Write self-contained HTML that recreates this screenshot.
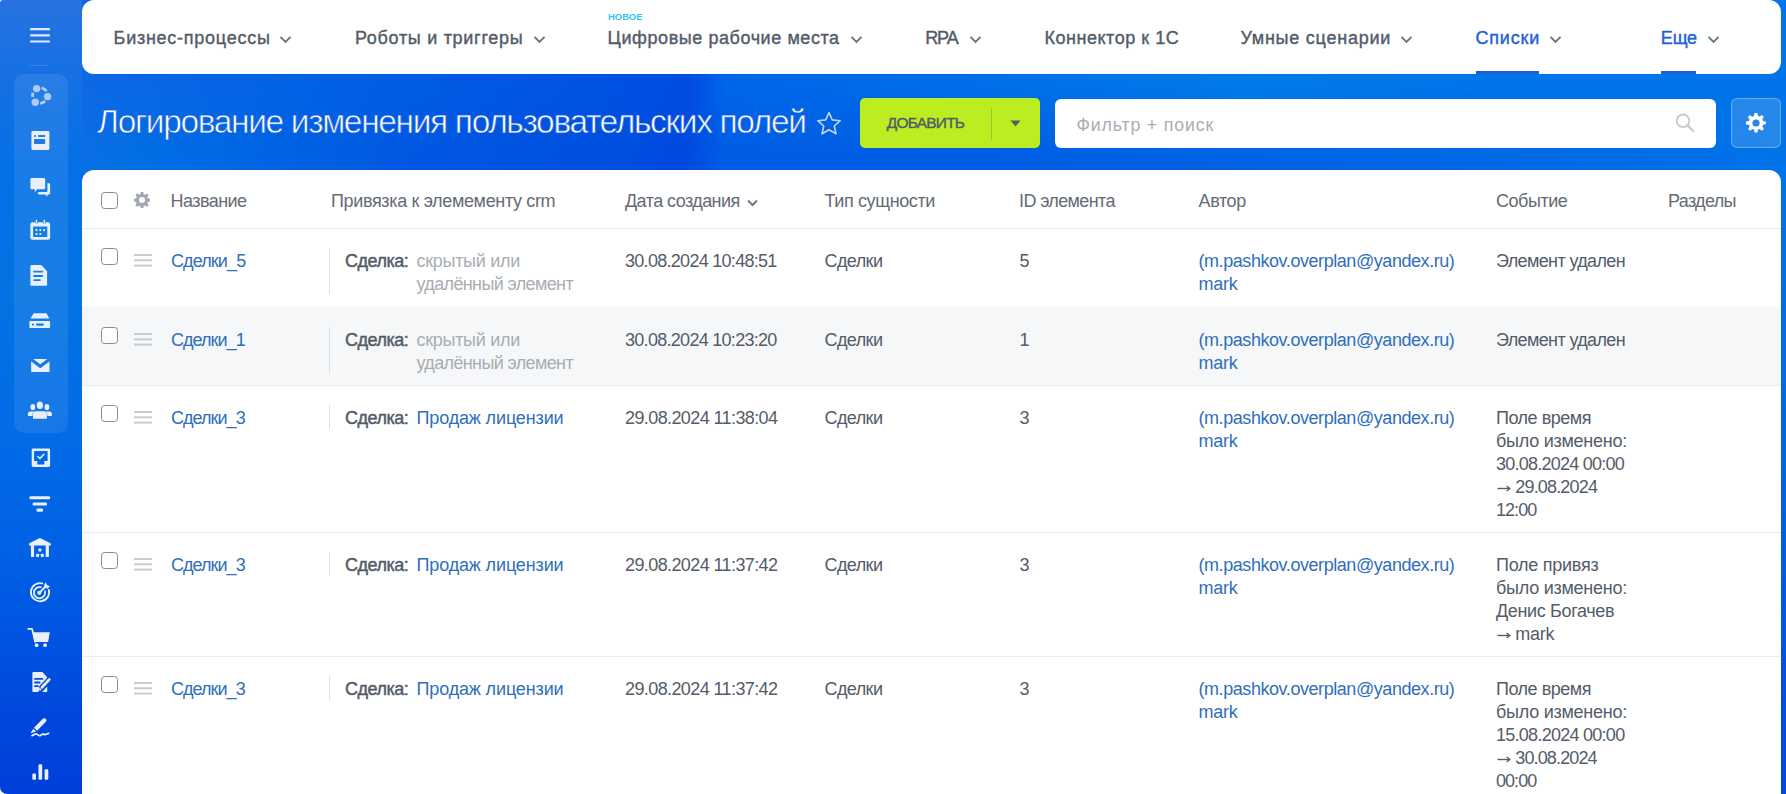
<!DOCTYPE html>
<html><head><meta charset="utf-8">
<style>
*{margin:0;padding:0;box-sizing:border-box}
html,body{width:1786px;height:794px;overflow:hidden;background:#fff;font-family:"Liberation Sans",sans-serif}
#bg{position:absolute;left:0;top:0;width:1786px;height:794px;border-radius:3px 0 0 7px;overflow:hidden;
 background:linear-gradient(180deg,#2872e0 0px,#1070e4 100px,#0470e6 170px,#0272e4 300px,#026ae6 450px,#0060e5 560px,#0050e0 660px,#0046dc 720px,#0040d8 794px);}
#strip{position:absolute;left:82px;top:0;width:1704px;height:172px;background:linear-gradient(90deg,#0a70e4 0px,#0070e4 63px,#0058e2 323px,#004ee0 548px,#0048e0 598px,#005ce4 643px,#005ce4 918px,#0068e6 1423px,#0074e8 1704px);}
#strip2{position:absolute;left:82px;top:0;width:1704px;height:172px;background:linear-gradient(90deg,#0e68e4 0px,#0062e4 218px,#0058e2 418px,#0050e2 558px,#004ce2 608px,#0066e8 643px,#0070e8 918px,#007ce8 1168px,#0074e8 1418px,#0074e8 1704px);-webkit-mask-image:linear-gradient(180deg,#000 80px,rgba(0,0,0,0) 165px);mask-image:linear-gradient(180deg,#000 80px,rgba(0,0,0,0) 165px)}
#rstrip{position:absolute;left:1760px;top:150px;width:26px;height:644px;background:linear-gradient(180deg,#0074e8,#0066e6 300px,#0048de 644px)}
.abs{position:absolute;white-space:nowrap}
#nav{position:absolute;left:82px;top:0;width:1699px;height:74px;background:#fff;border-radius:12px}
#nav:before{content:"";position:absolute;left:0;top:0;width:12px;height:12px}
.nv{position:absolute;top:27px;font-size:18px;line-height:23px;font-weight:400;color:#525c69;-webkit-text-stroke:0.4px #525c69;white-space:nowrap}
.nv.act{color:#1f62d6;-webkit-text-stroke:0.4px #1f62d6}
.chev{position:absolute;top:36px;width:12px;height:7px}
.ul{position:absolute;top:71px;height:3px;background:#1f5ed6}
#title{position:absolute;left:97px;top:101.5px;font-size:33.5px;line-height:40px;color:#fff;white-space:nowrap;letter-spacing:-1.35px;-webkit-text-stroke:0.9px rgba(8,88,226,0.75)}
#card{position:absolute;left:82px;top:170px;width:1699px;height:640px;background:#fff;border-radius:12px 12px 0 0}
.t{position:absolute;font-size:18px;line-height:23px;color:#535c69;white-space:nowrap}
.h{color:#646b75}
.lk{color:#2f6fbb}
.gr{color:#a8adb4}
.b{-webkit-text-stroke:0.45px #535c69}
.cb{position:absolute;width:17px;height:17px;border:1.6px solid #868c93;border-radius:3.5px;background:#fff}
.drag{position:absolute;width:18px;height:13px}
.vl{position:absolute;width:1px;background:#dcdfe3}
.hl{position:absolute;left:82px;width:1699px;height:1px;background:#edeef0}
.ico{position:absolute}
</style></head><body>
<div id="bg"><div id="strip"></div><div id="strip2"></div><div id="rstrip"></div></div>

<!-- sidebar -->
<div class="abs" style="left:14px;top:74px;width:54px;height:359px;border-radius:10px;background:rgba(255,255,255,0.085)"></div>

<svg class="ico" style="left:0;top:0" width="82" height="794" viewBox="0 0 82 794">
<g fill="#e9f0fb">
<!-- hamburger -->
<rect x="30" y="28" width="20" height="2.2" rx="0.5" fill="rgba(255,255,255,0.85)"/>
<rect x="30" y="34.2" width="20" height="2.2" rx="0.5" fill="rgba(255,255,255,0.85)"/>
<rect x="30" y="40.4" width="20" height="2.2" rx="0.5" fill="rgba(255,255,255,0.85)"/>
<rect x="30" y="65" width="18" height="1" fill="rgba(255,255,255,0.13)"/>
<!-- 1 dots -->
<g fill="rgba(255,255,255,0.62)">
<circle cx="36.6" cy="88.6" r="3.7"/><circle cx="47.6" cy="96.6" r="3.7"/><circle cx="35.3" cy="102.2" r="3.7"/>
</g>
<g fill="none" stroke="rgba(255,255,255,0.62)" stroke-width="2.8">
<path d="M41.6 87.9 A8.3 8.3 0 0 1 46.6 91.3"/>
<path d="M32.9 92.6 A8.3 8.3 0 0 0 32.8 97"/>
<path d="M40.2 103.4 A8.3 8.3 0 0 0 45.2 101"/>
</g>
<!-- 2 window -->
<path fill-rule="evenodd" d="M32.8 131.1h15.2a1.4 1.4 0 0 1 1.4 1.4v16a1.4 1.4 0 0 1-1.4 1.4H32.8a1.4 1.4 0 0 1-1.4-1.4v-16a1.4 1.4 0 0 1 1.4-1.4zM35.1 134.9a1 1 0 1 0 0.01 0zM38.9 135.1h5.5a0.9 0.9 0 0 1 0 1.8h-5.5a0.9 0.9 0 0 1 0-1.8zM35 139h9.2a1 1 0 0 1 1 1v2.9a1 1 0 0 1-1 1H35a1 1 0 0 1-1-1V140a1 1 0 0 1 1-1z"/>
<!-- 3 chat -->
<path d="M31.8 178.1h12a1.4 1.4 0 0 1 1.4 1.4v8.4a1.4 1.4 0 0 1-1.4 1.4H37.2l-2.4 3v-3h-3a1.4 1.4 0 0 1-1.4-1.4v-8.4a1.4 1.4 0 0 1 1.4-1.4z"/>
<path d="M47.4 183.3h1.3a1.4 1.4 0 0 1 1.4 1.4v8.5a1.4 1.4 0 0 1-1.4 1.4h-1.3v2.2l-2.2-2.2h-6.3a0.8 0.8 0 0 1-0.8-0.8v-1.8h8.4a0.9 0.9 0 0 0 0.9-0.9z"/>
<!-- 4 calendar -->
<path fill-rule="evenodd" d="M32.4 222.2h2.4a1.8 1.8 0 0 0 3.4 0h4.4a1.8 1.8 0 0 0 3.4 0h2.1a2 2 0 0 1 2 2v13.6a2 2 0 0 1-2 2H32.4a2 2 0 0 1-2-2v-13.6a2 2 0 0 1 2-2zM33.1 226.5v10.5h14.2v-10.5z"/>
<rect x="35.7" y="219.8" width="1.5" height="3.2" rx="0.7"/><rect x="43.6" y="219.8" width="1.5" height="3.2" rx="0.7"/>
<circle cx="36.5" cy="230.1" r="1.1"/><circle cx="40.3" cy="230.1" r="1.1"/><circle cx="44.1" cy="230.1" r="1.1"/>
<circle cx="36.5" cy="234" r="1.1"/><circle cx="40.3" cy="234" r="1.1"/>
<!-- 5 document -->
<path fill-rule="evenodd" d="M31.6 265.1h9.6l5.9 6.2v13.3a1.2 1.2 0 0 1-1.2 1.2H31.6a1.2 1.2 0 0 1-1.2-1.2v-18.3a1.2 1.2 0 0 1 1.2-1.2zM34.1 270.8a0.9 0.9 0 0 0 0 1.8h8.2a0.9 0.9 0 0 0 0-1.8zM34.1 275.1a0.9 0.9 0 0 0 0 1.8h8.2a0.9 0.9 0 0 0 0-1.8zM34.1 279.2a0.9 0.9 0 0 0 0 1.8h5.8a0.9 0.9 0 0 0 0-1.8z"/>
<!-- 6 drive -->
<path d="M33.6 313.2h12.9l2.8 5.4H30.6z"/>
<path fill-rule="evenodd" d="M30.2 320.9h19.1a0.8 0.8 0 0 1 0.8 0.8v5.5a0.8 0.8 0 0 1-0.8 0.8H30.2a0.8 0.8 0 0 1-0.8-0.8v-5.5a0.8 0.8 0 0 1 0.8-0.8zM33 323.4a1.1 1.1 0 1 0 0.01 0zM37.1 323.5a1.1 1.1 0 0 0 0 2.2h5.7a1.1 1.1 0 0 0 0-2.2z"/>
<!-- 7 mail -->
<path d="M33.2 359.1h14.1l-7 5.2z"/>
<path d="M31.1 361.6l9.2 6.6 9.2-6.6v9.6a0.8 0.8 0 0 1-0.8 0.8H31.9a0.8 0.8 0 0 1-0.8-0.8z"/>
<!-- 8 people -->
<ellipse cx="39.9" cy="405.3" rx="3.1" ry="3.8"/>
<path d="M35.6 411.2h8.6a2.6 2.6 0 0 1 2.6 2.6v4.9H33v-4.9a2.6 2.6 0 0 1 2.6-2.6z"/>
<ellipse cx="32.8" cy="407" rx="2.4" ry="3.1"/>
<path d="M30.4 411.6h3.7l-1.5 1.6v2.9h-4.7v-2a2.5 2.5 0 0 1 2.5-2.5z"/>
<ellipse cx="46.9" cy="407" rx="2.4" ry="3.1"/>
<path d="M49.4 411.6h-3.7l1.5 1.6v2.9h4.7v-2a2.5 2.5 0 0 0-2.5-2.5z"/>
<!-- 9 task -->
<path fill-rule="evenodd" d="M33.1 448.4h15.6a1.4 1.4 0 0 1 1.4 1.4v15.8a1.4 1.4 0 0 1-1.4 1.4H33.1a1.4 1.4 0 0 1-1.4-1.4v-15.8a1.4 1.4 0 0 1 1.4-1.4zM34.1 450.9v10.1h3.2v3.4h7v-3.4h3.3v-10.1z"/>
<path d="M37.9 456.5l2 2 4-4.2" fill="none" stroke="#e9f0fb" stroke-width="1.6" stroke-linecap="round" stroke-linejoin="round"/>
<!-- 10 funnel -->
<rect x="29.4" y="496.2" width="20.8" height="3" rx="1.3"/>
<rect x="32.6" y="502.4" width="14.4" height="3.2" rx="1.3"/>
<rect x="36.5" y="508.6" width="6.6" height="3.2" rx="1.3"/>
<!-- 11 warehouse -->
<path d="M39.9 538.1l10.2 4.8a1.3 1.3 0 0 1 0.7 1.2v1.3H29v-1.3a1.3 1.3 0 0 1 0.7-1.2z"/>
<rect x="30.9" y="545" width="3.2" height="12" rx="0.3"/>
<rect x="45.7" y="545" width="3.2" height="12" rx="0.3"/>
<rect x="38.4" y="548.4" width="3" height="3" rx="0.4"/>
<rect x="36.1" y="553.8" width="3" height="3.2" rx="0.4"/>
<rect x="40.8" y="553.8" width="3" height="3.2" rx="0.4"/>
<!-- 12 target -->
<g fill="none" stroke="#e9f0fb" stroke-width="1.8" stroke-linecap="round">
<path d="M42.3 583.4 A9.1 9.1 0 1 0 48.8 589.8"/>
<path d="M40.7 587.2 A5.6 5.6 0 1 0 45 591.5"/>
<path d="M39.3 592.8 L46 586"/>
</g>
<circle cx="39.3" cy="592.8" r="2.1"/>
<path d="M45.7 582.3l1.2 2.8 3.1 1.1-2.4 2.3-2.9-0.6-0.6-2.9z"/>
<!-- 13 cart -->
<path d="M28.2 628.8h3.2a0.9 0.9 0 0 1 0.9 0.7l2.9 12.3" fill="none" stroke="#e9f0fb" stroke-width="1.7" stroke-linecap="round"/>
<path d="M32.5 632.3h17.3l-1.7 9.8H34.4z"/>
<circle cx="36.6" cy="645.2" r="1.9"/><circle cx="45.1" cy="645.2" r="1.9"/>
<!-- 14 doc edit -->
<path fill-rule="evenodd" d="M33.2 672.1h9.2l4.6 5v3.6l-7.6 7.8-1 3.5H33.2a0.8 0.8 0 0 1-0.8-0.8v-18.3a0.8 0.8 0 0 1 0.8-0.8zM35 678a0.9 0.9 0 0 0 0 1.8h7.4a0.9 0.9 0 0 0 0-1.8zM35 681.6a0.9 0.9 0 0 0 0 1.8h4.6a0.9 0.9 0 0 0 0-1.8zM35 685.3a0.9 0.9 0 0 0 0 1.8h3a0.9 0.9 0 0 0 0-1.8z"/>
<path d="M49.2 679.6L42 687.2" stroke="#064ddf" stroke-width="5.4" stroke-linecap="round"/><path d="M49.2 679.6L42 687.2" stroke="#e9f0fb" stroke-width="2.8" stroke-linecap="round"/><circle cx="40" cy="689.4" r="1.2"/>
<path d="M47.2 686.6v4.7a0.7 0.7 0 0 1-0.7 0.7h-4.3z"/>
<!-- 15 signature -->
<path d="M43.1 718.6a1.6 1.6 0 0 1 2.3 0.1l0.6 0.6a1.6 1.6 0 0 1 0 2.2l-8.9 9.2-3.1-3z"/>
<path d="M33.4 728.8l2.7 2.8-4.6 1.5a0.5 0.5 0 0 1-0.6-0.6z"/>
<path d="M32 735.6c2.5-0.8 3.4-2.2 4.7-1.6 1.4 0.6 1.7 2 3.2 1.7 1.4-0.3 1.8-1.8 3.3-1.5 1.4 0.3 2 1.2 5.4-0.9" fill="none" stroke="#e9f0fb" stroke-width="1.7" stroke-linecap="round"/>
<!-- 16 chart -->
<rect x="32.3" y="773.5" width="3.7" height="6.3" rx="1.2"/>
<rect x="38.5" y="764.2" width="3.7" height="15.6" rx="1.2"/>
<rect x="44.6" y="769.2" width="3.7" height="10.6" rx="1.2"/>
</g>
</svg>

<!-- nav -->
<div id="nav"></div>
<div class="nv" style="left:113.6px;letter-spacing:0.74px">Бизнес-процессы</div>
<div class="nv" style="left:354.9px;letter-spacing:0.71px">Роботы и триггеры</div>
<div class="abs" style="left:608px;top:11px;font-size:9.5px;line-height:12px;font-weight:700;color:#2fc6f6">НОВОЕ</div>
<div class="nv" style="left:607.6px;letter-spacing:0.57px">Цифровые рабочие места</div>
<div class="nv" style="left:925.2px;letter-spacing:-1.1px">RPA</div>
<div class="nv" style="left:1044.5px;letter-spacing:0.52px">Коннектор к 1С</div>
<div class="nv" style="left:1240.4px;letter-spacing:0.76px">Умные сценарии</div>
<div class="nv act" style="left:1475.5px;letter-spacing:0.8px">Списки</div>
<div class="nv act" style="left:1660.8px;letter-spacing:-0.15px">Еще</div>
<div class="ul" style="left:1475.5px;width:63px"></div>
<div class="ul" style="left:1660.5px;width:35.5px"></div>

<svg class="ico" style="left:279.3px;top:34.5px" width="13" height="9" viewBox="0 0 13 9"><path d="M1.5 1.8l5 5 5-5" fill="none" stroke="#6a727d" stroke-width="1.9"/></svg>
<svg class="ico" style="left:532.5px;top:34.5px" width="13" height="9" viewBox="0 0 13 9"><path d="M1.5 1.8l5 5 5-5" fill="none" stroke="#6a727d" stroke-width="1.9"/></svg>
<svg class="ico" style="left:849.9px;top:34.5px" width="13" height="9" viewBox="0 0 13 9"><path d="M1.5 1.8l5 5 5-5" fill="none" stroke="#6a727d" stroke-width="1.9"/></svg>
<svg class="ico" style="left:968.5px;top:34.5px" width="13" height="9" viewBox="0 0 13 9"><path d="M1.5 1.8l5 5 5-5" fill="none" stroke="#6a727d" stroke-width="1.9"/></svg>
<svg class="ico" style="left:1400.0px;top:34.5px" width="13" height="9" viewBox="0 0 13 9"><path d="M1.5 1.8l5 5 5-5" fill="none" stroke="#6a727d" stroke-width="1.9"/></svg>
<svg class="ico" style="left:1549.0px;top:34.5px" width="13" height="9" viewBox="0 0 13 9"><path d="M1.5 1.8l5 5 5-5" fill="none" stroke="#6a727d" stroke-width="1.9"/></svg>
<svg class="ico" style="left:1706.9px;top:34.5px" width="13" height="9" viewBox="0 0 13 9"><path d="M1.5 1.8l5 5 5-5" fill="none" stroke="#6a727d" stroke-width="1.9"/></svg>
<svg class="ico" style="left:816px;top:111px" width="26" height="25" viewBox="0 0 26 25"><path d="M13 1.6l3.3 7.3 7.9.8-5.9 5.3 1.7 7.8L13 18.8l-7 4 1.7-7.8L1.8 9.7l7.9-.8z" fill="none" stroke="#c5d3ee" stroke-width="1.6" stroke-linejoin="round"/></svg>
<div class="abs" style="left:860px;top:98px;width:180px;height:50px;background:#bbed21;border-radius:5px"></div>
<div class="abs" style="left:886.8px;top:111.2px;font-size:15.5px;line-height:23px;color:#535c69;-webkit-text-stroke:0.4px #535c69;letter-spacing:-0.8px">ДОБАВИТЬ</div>
<div class="abs" style="left:991px;top:108px;width:1px;height:32px;background:rgba(83,92,105,0.3)"></div>
<svg class="ico" style="left:1010px;top:120px" width="11" height="7" viewBox="0 0 11 7"><path d="M0.5 0.5h10l-5 6z" fill="#535c69"/></svg>
<div class="abs" style="left:1055px;top:99px;width:661px;height:49px;background:#fff;border-radius:6px"></div>
<div class="abs" style="left:1076.5px;top:113.5px;font-size:17.7px;line-height:23px;color:#a8adb4;letter-spacing:0.86px">Фильтр + поиск</div>
<svg class="ico" style="left:1674px;top:112px" width="22" height="22" viewBox="0 0 22 22"><circle cx="9" cy="8.8" r="6.3" fill="none" stroke="#c6c9ce" stroke-width="1.8"/><path d="M13.6 13.4l5.6 5.6" stroke="#c6c9ce" stroke-width="2.2" stroke-linecap="round"/></svg>
<div class="abs" style="left:1731px;top:98px;width:50px;height:50px;background:rgba(255,255,255,0.15);border:1px solid rgba(255,255,255,0.3);border-radius:6px"></div>
<svg class="ico" style="left:1745px;top:112px" width="22" height="22" viewBox="0 0 22 22"><path fill="#fff" d="M9.6 1h2.8l.5 2.8 1.7.7 2.3-1.6 2 2-1.6 2.3.7 1.7 2.8.5v2.8l-2.8.5-.7 1.7 1.6 2.3-2 2-2.3-1.6-1.7.7-.5 2.8H9.6l-.5-2.8-1.7-.7-2.3 1.6-2-2 1.6-2.3-.7-1.7L1 12.4V9.6l2.8-.5.7-1.7-1.6-2.3 2-2 2.3 1.6 1.7-.7zM11 7.4a3.6 3.6 0 1 0 0 7.2 3.6 3.6 0 0 0 0-7.2z"/></svg>
<div id="title">Логирование изменения пользовательских полей</div>

<div id="card"></div>
<!--TABLE-->
<div class="cb" style="left:101px;top:192px"></div>
<svg class="ico" style="left:134px;top:192px" width="16" height="16" viewBox="0 0 16 16"><path fill="#a3a9b1" d="M6.7 0h2.6l.4 2.2 1.3.6 1.9-1.3 1.8 1.8-1.3 1.9.6 1.3 2.2.4v2.6l-2.2.4-.6 1.3 1.3 1.9-1.8 1.8-1.9-1.3-1.3.6-.4 2.2H6.7l-.4-2.2-1.3-.6-1.9 1.3-1.8-1.8 1.3-1.9-.6-1.3L0 9.3V6.7l2.2-.4.6-1.3-1.3-1.9 1.8-1.8 1.9 1.3 1.3-.6zM8 5a3 3 0 1 0 0 6 3 3 0 0 0 0-6z"/></svg>
<div class="t h" style="left:170.5px;top:190px;letter-spacing:-0.557px">Название</div>
<div class="t h" style="left:331px;top:190px;letter-spacing:-0.35px">Привязка к элемементу crm</div>
<div class="t h" style="left:625px;top:190px;letter-spacing:-0.567px">Дата создания</div>
<div class="t h" style="left:824.5px;top:190px;letter-spacing:-0.382px">Тип сущности</div>
<div class="t h" style="left:1019px;top:190px;letter-spacing:-0.62px">ID элемента</div>
<div class="t h" style="left:1198.5px;top:190px;letter-spacing:-0.375px">Автор</div>
<div class="t h" style="left:1496px;top:190px;letter-spacing:-0.467px">Событие</div>
<div class="t h" style="left:1668px;top:190px;letter-spacing:-0.667px">Разделы</div>
<svg class="ico" style="left:747px;top:199px" width="11" height="8" viewBox="0 0 11 8"><path d="M1 1.5l4.5 4.5 4.5-4.5" fill="none" stroke="#707884" stroke-width="2"/></svg>
<div class="hl" style="top:228px"></div>
<div class="hl" style="top:307px"></div>
<div class="cb" style="left:101px;top:247.8px"></div>
<svg class="ico" style="left:134px;top:254px" width="18" height="13" viewBox="0 0 18 13"><rect y="0" width="18" height="2" fill="#c8ccd1"/><rect y="5.3" width="18" height="2" fill="#c8ccd1"/><rect y="10.6" width="18" height="2" fill="#c8ccd1"/></svg>
<div class="t lk" style="left:171px;top:249.5px;letter-spacing:-0.886px">Сделки_5</div>
<div class="vl" style="left:329px;top:248px;height:46px"></div>
<div class="t b" style="left:345px;top:249.5px;letter-spacing:-0.5px">Сделка:</div>
<div class="t gr" style="left:416.5px;top:249.5px"><div style="letter-spacing:-0.29px">скрытый или</div><div style="letter-spacing:-0.625px">удалённый элемент</div></div>
<div class="t" style="left:625px;top:249.5px;letter-spacing:-0.711px">30.08.2024 10:48:51</div>
<div class="t" style="left:824.5px;top:249.5px;letter-spacing:-0.58px">Сделки</div>
<div class="t" style="left:1019.5px;top:249.5px">5</div>
<div class="t lk" style="left:1198.5px;top:249.5px"><div style="letter-spacing:-0.438px">(m.pashkov.overplan@yandex.ru)</div><div style="letter-spacing:-0.233px">mark</div></div>
<div class="t" style="left:1496px;top:249.5px"><div style="letter-spacing:-0.623px">Элемент удален</div></div>
<div class="abs" style="left:82px;top:307px;width:1699px;height:78px;background:#f5f7f8"></div>
<div class="hl" style="top:385px"></div>
<div class="cb" style="left:101px;top:326.8px"></div>
<svg class="ico" style="left:134px;top:333px" width="18" height="13" viewBox="0 0 18 13"><rect y="0" width="18" height="2" fill="#c8ccd1"/><rect y="5.3" width="18" height="2" fill="#c8ccd1"/><rect y="10.6" width="18" height="2" fill="#c8ccd1"/></svg>
<div class="t lk" style="left:171px;top:328.5px;letter-spacing:-0.957px">Сделки_1</div>
<div class="vl" style="left:329px;top:327px;height:46px"></div>
<div class="t b" style="left:345px;top:328.5px;letter-spacing:-0.5px">Сделка:</div>
<div class="t gr" style="left:416.5px;top:328.5px"><div style="letter-spacing:-0.29px">скрытый или</div><div style="letter-spacing:-0.625px">удалённый элемент</div></div>
<div class="t" style="left:625px;top:328.5px;letter-spacing:-0.711px">30.08.2024 10:23:20</div>
<div class="t" style="left:824.5px;top:328.5px;letter-spacing:-0.58px">Сделки</div>
<div class="t" style="left:1019.5px;top:328.5px">1</div>
<div class="t lk" style="left:1198.5px;top:328.5px"><div style="letter-spacing:-0.438px">(m.pashkov.overplan@yandex.ru)</div><div style="letter-spacing:-0.233px">mark</div></div>
<div class="t" style="left:1496px;top:328.5px"><div style="letter-spacing:-0.623px">Элемент удален</div></div>
<div class="hl" style="top:532px"></div>
<div class="cb" style="left:101px;top:404.8px"></div>
<svg class="ico" style="left:134px;top:411px" width="18" height="13" viewBox="0 0 18 13"><rect y="0" width="18" height="2" fill="#c8ccd1"/><rect y="5.3" width="18" height="2" fill="#c8ccd1"/><rect y="10.6" width="18" height="2" fill="#c8ccd1"/></svg>
<div class="t lk" style="left:171px;top:406.5px;letter-spacing:-0.957px">Сделки_3</div>
<div class="vl" style="left:329px;top:405px;height:24px"></div>
<div class="t b" style="left:345px;top:406.5px;letter-spacing:-0.5px">Сделка:</div>
<div class="t lk" style="left:416.5px;top:406.5px;letter-spacing:-0.143px">Продаж лицензии</div>
<div class="t" style="left:625px;top:406.5px;letter-spacing:-0.6px">29.08.2024 11:38:04</div>
<div class="t" style="left:824.5px;top:406.5px;letter-spacing:-0.58px">Сделки</div>
<div class="t" style="left:1019.5px;top:406.5px">3</div>
<div class="t lk" style="left:1198.5px;top:406.5px"><div style="letter-spacing:-0.438px">(m.pashkov.overplan@yandex.ru)</div><div style="letter-spacing:-0.233px">mark</div></div>
<div class="t" style="left:1496px;top:406.5px"><div style="letter-spacing:-0.478px">Поле время</div><div style="letter-spacing:-0.262px">было изменено:</div><div style="letter-spacing:-0.76px">30.08.2024 00:00</div><div style="position:relative;padding-left:19.3px;letter-spacing:-0.833px"><svg style="position:absolute;left:1px;top:9.3px" width="14" height="7" viewBox="0 0 14 7"><path d="M0.5 3.5h12" stroke="#535c69" stroke-width="1.4"/><path d="M9.6 1l3.2 2.5-3.2 2.5" fill="none" stroke="#535c69" stroke-width="1.4"/></svg>29.08.2024</div><div style="letter-spacing:-0.95px">12:00</div></div>
<div class="hl" style="top:656px"></div>
<div class="cb" style="left:101px;top:551.8px"></div>
<svg class="ico" style="left:134px;top:558px" width="18" height="13" viewBox="0 0 18 13"><rect y="0" width="18" height="2" fill="#c8ccd1"/><rect y="5.3" width="18" height="2" fill="#c8ccd1"/><rect y="10.6" width="18" height="2" fill="#c8ccd1"/></svg>
<div class="t lk" style="left:171px;top:553.5px;letter-spacing:-0.957px">Сделки_3</div>
<div class="vl" style="left:329px;top:552px;height:24px"></div>
<div class="t b" style="left:345px;top:553.5px;letter-spacing:-0.5px">Сделка:</div>
<div class="t lk" style="left:416.5px;top:553.5px;letter-spacing:-0.143px">Продаж лицензии</div>
<div class="t" style="left:625px;top:553.5px;letter-spacing:-0.6px">29.08.2024 11:37:42</div>
<div class="t" style="left:824.5px;top:553.5px;letter-spacing:-0.58px">Сделки</div>
<div class="t" style="left:1019.5px;top:553.5px">3</div>
<div class="t lk" style="left:1198.5px;top:553.5px"><div style="letter-spacing:-0.438px">(m.pashkov.overplan@yandex.ru)</div><div style="letter-spacing:-0.233px">mark</div></div>
<div class="t" style="left:1496px;top:553.5px"><div style="letter-spacing:-0.26px">Поле привяз</div><div style="letter-spacing:-0.262px">было изменено:</div><div style="letter-spacing:-0.35px">Денис Богачев</div><div style="position:relative;padding-left:19.3px;letter-spacing:-0.233px"><svg style="position:absolute;left:1px;top:9.3px" width="14" height="7" viewBox="0 0 14 7"><path d="M0.5 3.5h12" stroke="#535c69" stroke-width="1.4"/><path d="M9.6 1l3.2 2.5-3.2 2.5" fill="none" stroke="#535c69" stroke-width="1.4"/></svg>mark</div></div>
<div class="cb" style="left:101px;top:675.8px"></div>
<svg class="ico" style="left:134px;top:682px" width="18" height="13" viewBox="0 0 18 13"><rect y="0" width="18" height="2" fill="#c8ccd1"/><rect y="5.3" width="18" height="2" fill="#c8ccd1"/><rect y="10.6" width="18" height="2" fill="#c8ccd1"/></svg>
<div class="t lk" style="left:171px;top:677.5px;letter-spacing:-0.957px">Сделки_3</div>
<div class="vl" style="left:329px;top:676px;height:24px"></div>
<div class="t b" style="left:345px;top:677.5px;letter-spacing:-0.5px">Сделка:</div>
<div class="t lk" style="left:416.5px;top:677.5px;letter-spacing:-0.143px">Продаж лицензии</div>
<div class="t" style="left:625px;top:677.5px;letter-spacing:-0.6px">29.08.2024 11:37:42</div>
<div class="t" style="left:824.5px;top:677.5px;letter-spacing:-0.58px">Сделки</div>
<div class="t" style="left:1019.5px;top:677.5px">3</div>
<div class="t lk" style="left:1198.5px;top:677.5px"><div style="letter-spacing:-0.438px">(m.pashkov.overplan@yandex.ru)</div><div style="letter-spacing:-0.233px">mark</div></div>
<div class="t" style="left:1496px;top:677.5px"><div style="letter-spacing:-0.478px">Поле время</div><div style="letter-spacing:-0.262px">было изменено:</div><div style="letter-spacing:-0.733px">15.08.2024 00:00</div><div style="position:relative;padding-left:19.3px;letter-spacing:-0.867px"><svg style="position:absolute;left:1px;top:9.3px" width="14" height="7" viewBox="0 0 14 7"><path d="M0.5 3.5h12" stroke="#535c69" stroke-width="1.4"/><path d="M9.6 1l3.2 2.5-3.2 2.5" fill="none" stroke="#535c69" stroke-width="1.4"/></svg>30.08.2024</div><div style="letter-spacing:-0.95px">00:00</div></div>
<!--/TABLE-->
</body></html>
